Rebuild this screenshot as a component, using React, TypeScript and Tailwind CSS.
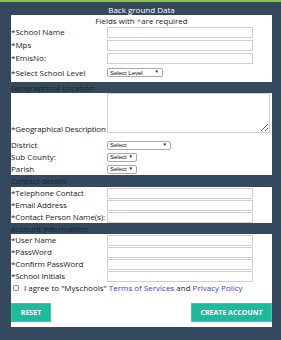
import React from 'react';

const font = "font-['Open_Sans',_'DejaVu_Sans',_sans-serif]";

const TextRow: React.FC<{ label: string; h?: string }> = ({ label, h = 'h-[12px]' }) => (
  <div className={`flex items-center ${h}`}>
    <span className="w-[96px] shrink-0 whitespace-nowrap tracking-[-0.1px]">{label}</span>
    <input
      type="text"
      className="ml-auto mr-[19px] h-[11px] w-[146px] border border-[#cfcfcf] bg-white outline-none"
    />
  </div>
);

const FakeSelect: React.FC<{ text: string; w: string }> = ({ text, w }) => (
  <div
    className={`flex h-[9px] ${w} items-center justify-between rounded-[2px] border border-[#aaaaaa] bg-white pl-[2px] pr-[3px] font-['Liberation_Sans',_Arial,_sans-serif] text-[6px] leading-none text-[#111]`}
  >
    <span>{text}</span>
    <span className="text-[4.5px]">▼</span>
  </div>
);

const SelectRow: React.FC<{ label: string; text: string; w: string; h?: string }> = ({ label, text, w, h = 'h-[12px]' }) => (
  <div className={`flex items-center ${h}`}>
    <span className="w-[96px] shrink-0 whitespace-nowrap">{label}</span>
    <FakeSelect text={text} w={w} />
  </div>
);

const Header: React.FC<{ children: React.ReactNode; h: string }> = ({ children, h }) => (
  <div className={`flex items-center ${h} text-[#1c2630]`}>{children}</div>
);

export default function App() {
  return (
    <div className={`w-[281px] h-[340px] overflow-hidden bg-[#34495e] ${font} text-[8px] leading-none text-[#222]`}>
      <div className="h-[2px] bg-[#8cc63f]" />
      <div className="pl-[11px] pr-[9px]">
        <div className="flex h-[13px] items-end justify-center pb-[1px] text-white">Back ground Data</div>

        {/* background data */}
        <div className="bg-white pb-[3px]">
          <div className="flex h-[12px] items-center justify-center">
            Fields with&nbsp;<span className="text-[#e74c3c]">*</span>are required
          </div>
          <div className="flex h-[13px] items-start">
            <span className="w-[96px] shrink-0 pt-[1px]">*School Name</span>
            <input type="text" className="ml-auto mr-[19px] h-[11px] w-[146px] border border-[#cfcfcf] outline-none" />
          </div>
          <div className="flex h-[13px] items-start">
            <span className="w-[96px] shrink-0 pt-[1px]">*Mps</span>
            <input type="text" className="ml-auto mr-[19px] h-[11px] w-[146px] border border-[#cfcfcf] outline-none" />
          </div>
          <div className="flex h-[13px] items-start">
            <span className="w-[96px] shrink-0 pt-[1px]">*EmisNo:</span>
            <input type="text" className="ml-auto mr-[19px] h-[11px] w-[146px] border border-[#cfcfcf] outline-none" />
          </div>
          <SelectRow label="*Select School Level" text="Select Level" w="w-[56px]" h="h-[13px]" />
        </div>

        <Header h="h-[11px]">Geographical Location</Header>

        {/* location */}
        <div className="bg-white">
          <div className="flex items-end">
            <span className="w-[96px] shrink-0 whitespace-nowrap tracking-[-0.15px]">*Geographical Description</span>
            <textarea className="ml-auto mr-[2px] h-[40px] w-[163px] resize border border-[#cfcfcf] outline-none" />
          </div>
          <div className="h-[6px]" />
          <SelectRow label="District" text="Select" w="w-[64px]" />
          <SelectRow label="Sub County:" text="Select" w="w-[30px]" />
          <SelectRow label="Parish" text="Select" w="w-[30px]" />
        </div>

        <Header h="h-[12px]">Contact details</Header>

        {/* contact */}
        <div className="bg-white">
          <TextRow label="*Telephone Contact" />
          <TextRow label="*Email Address" />
          <TextRow label="*Contact Person Name(s):" />
        </div>

        <Header h="h-[11px]">Account Information</Header>

        {/* account */}
        <div className="bg-white pb-[5px]">
          <TextRow label="*User Name" />
          <TextRow label="*PassWord" />
          <TextRow label="*Confirm PassWord" />
          <TextRow label="*School Initials" />
          <div className="flex h-[12px] items-center pl-[2px]">
            <span className="mr-[5px] h-[6px] w-[6px] rounded-[1px] border border-[#9a9a9a] bg-[#f3f3f3]" />
            <span>
              I agree to "Myschools" <span className="text-[#3b3bd6]">Terms of Services</span> and{' '}
              <span className="text-[#3b3bd6]">Privacy Policy</span>
            </span>
          </div>
          <div className="mt-[9px] flex justify-between">
            <button className="h-[19px] w-[40px] border border-[#3fcaa9] bg-[#1abc9c] text-[7px] font-bold text-white">
              RESET
            </button>
            <button className="h-[19px] w-[81px] border border-[#3fcaa9] bg-[#1abc9c] text-[7px] font-bold text-white">
              CREATE ACCOUNT
            </button>
          </div>
        </div>
      </div>
    </div>
  );
}
